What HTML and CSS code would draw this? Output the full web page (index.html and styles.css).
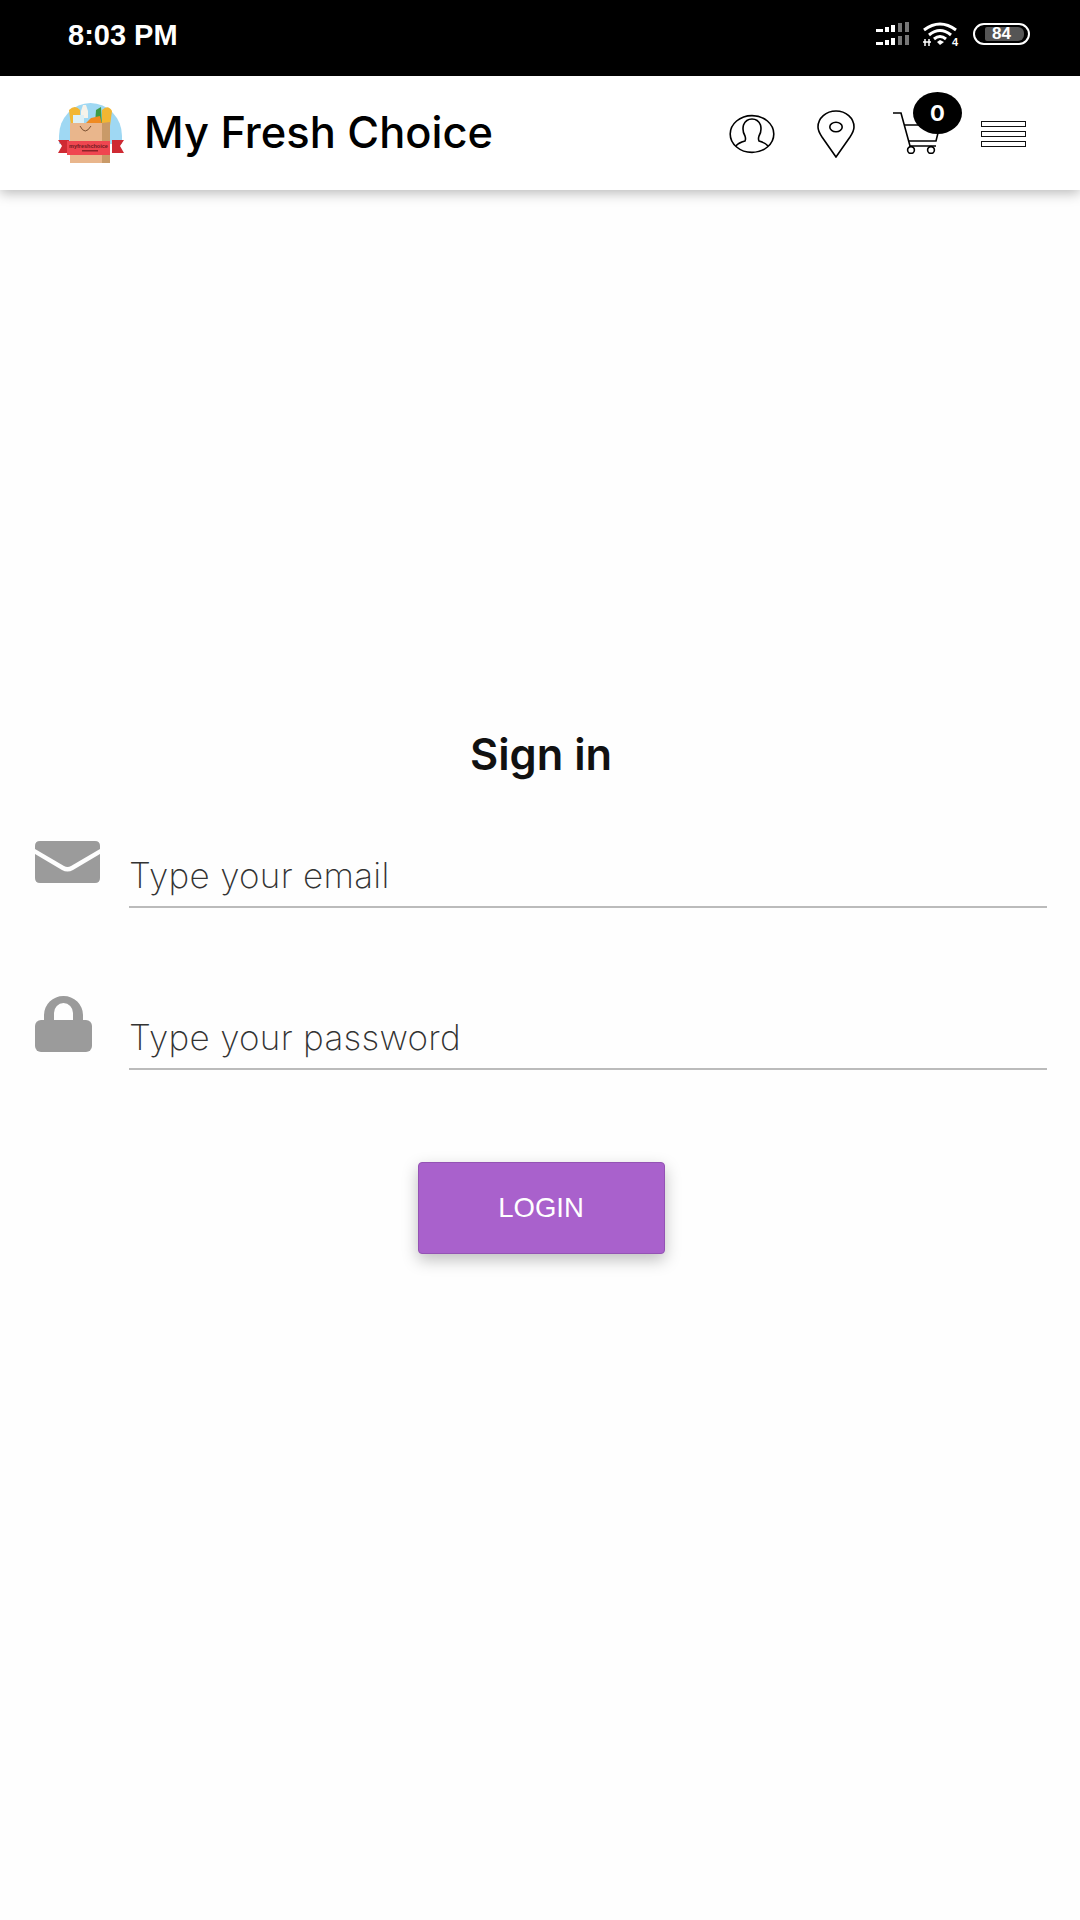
FILE: index.html
```html
<!DOCTYPE html>
<html lang="en">
<head>
    <meta charset="UTF-8">
    <meta name="viewport" content="width=device-width, initial-scale=1.0">
    <title>My Fresh Choice</title>
    <link rel="stylesheet" href="styles.css">
</head>
<body>
    <div class="status-bar">
        <span class="clock">8:03 PM</span>
        <div class="status-icons">
            <svg class="signal" width="36" height="24" viewBox="0 0 36 24">
                <g fill="#fff">
                    <rect x="0" y="7" width="7" height="3"/><rect x="9" y="5" width="4" height="5"/><rect x="15" y="3" width="4" height="7"/>
                    <rect x="0" y="20" width="7" height="3"/><rect x="9" y="18" width="4" height="5"/><rect x="15" y="16" width="4" height="7"/>
                </g>
                <g fill="#777">
                    <rect x="22" y="1" width="4" height="9"/><rect x="29" y="0" width="4" height="10"/>
                    <rect x="22" y="14" width="4" height="9"/><rect x="29" y="13" width="4" height="10"/>
                </g>
            </svg>
            <svg class="wifi" width="38" height="26" viewBox="0 0 38 26">
                <g fill="none" stroke="#fff" stroke-width="3">
                    <path d="M2 9 Q18 -3 34 9"/>
                    <path d="M7 14 Q18 5 29 14"/>
                    <path d="M12 18 Q18 13 24 18"/>
                </g>
                <path d="M15 21 L18 19 L22 21 L18 24 Z" fill="#fff"/>
                <path d="M3 18 V25 M7 18 V25 M1 21 H9" stroke="#fff" stroke-width="1.5" fill="none"/>
                <text class="wifi-num" x="30" y="25">4</text>
            </svg>
            <div class="battery">
                <span class="battery-fill"></span>
                <span class="battery-num">84</span>
            </div>
        </div>
    </div>

    <header class="app-header">
        <svg class="logo" width="68" height="62" viewBox="0 0 68 62">
            <path d="M1 34 A31.5 33 0 0 1 64 34 L64 42 L1 42 Z" fill="#9fd8f3"/>
            <path d="M11 8 Q17 2 22 8 L22 24 H13 Z" fill="#f2b632"/>
            <path d="M44 8 Q50 2 54 9 L52 24 H44 Z" fill="#f2b632"/>
            <path d="M23 9 L25 3 H28 L30 9 V16 H23 Z" fill="#f6f3ea"/>
            <rect x="15" y="13" width="11" height="9" fill="#dcf0f6"/>
            <path d="M37 22 L38 8 L43 5 L44 22 Z" fill="#3e9b45"/>
            <path d="M27 22 L33 16 L42 14 L44 22 Z" fill="#ef8a22"/>
            <path d="M12 21 H44 V61 H12 Z" fill="#e9b68c"/>
            <path d="M44 21 L52 20 V61 H44 Z" fill="#c99a68"/>
            <path d="M22 24 Q27 34 33 24" fill="none" stroke="#7a5030" stroke-width="1"/>
            <path d="M0 38 H11 V51 H0 L4 44 Z M66 38 H54 V51 H66 L62 44 Z" fill="#cf2a33"/>
            <rect x="9" y="39" width="43" height="14" fill="#ef4650"/>
            <text class="logo-text" x="11" y="46">myfreshchoice</text>
            <rect x="24" y="48" width="16" height="1.5" fill="#8e2329"/>
        </svg>
        <span class="brand">My Fresh Choice</span>
        <div class="header-icons">
            <svg class="icon-user" width="46" height="40" viewBox="0 0 46 40">
                <g fill="none" stroke="#000" stroke-width="1.6">
                    <ellipse cx="23" cy="20" rx="21.8" ry="18.4"/>
                    <path d="M7 32 Q9 29 16 27 Q17 25 16 22 Q13 17 14.5 11 Q17 5 23 5 Q29 5 31.5 11 Q33 17 30 22 Q29 25 30 27 Q37 29 39 32"/>
                </g>
            </svg>
            <svg class="icon-pin" width="38" height="48" viewBox="0 0 38 48">
                <g fill="none" stroke="#000" stroke-width="1.6">
                    <path d="M19 47 L5 27 Q1 21 1 17 A18 16 0 0 1 37 17 Q37 21 33 27 Z"/>
                    <ellipse cx="19" cy="17" rx="6.2" ry="4.8"/>
                </g>
            </svg>
            <div class="cart">
                <svg width="48" height="42" viewBox="0 0 48 42">
                    <g fill="none" stroke="#000" stroke-width="1.6">
                        <path d="M0 1 H8 L17 34 H43"/>
                        <path d="M11 13 H47 L43 29 H15"/>
                        <circle cx="18" cy="38" r="3.4"/>
                        <circle cx="38" cy="38" r="3.4"/>
                    </g>
                </svg>
                <span class="cart-badge">0</span>
            </div>
            <div class="menu-icon">
                <span></span><span></span><span></span>
            </div>
        </div>
    </header>

    <main class="login">
        <h1>Sign in</h1>
        <div class="field field-email">
            <svg class="field-icon" width="65" height="42" viewBox="0 0 65 42">
                <path d="M0 8 V5 Q0 0 5 0 H60 Q65 0 65 5 V8 L36 25 Q32.5 27 29 25 Z" fill="#9b9b9b"/>
                <path d="M0 13 L27 29 Q32.5 32 38 29 L65 13 V37 Q65 42 60 42 H5 Q0 42 0 37 Z" fill="#9b9b9b"/>
            </svg>
            <input type="text" placeholder="Type your email">
        </div>
        <div class="field field-password">
            <svg class="field-icon" width="65" height="56" viewBox="0 0 65 56">
                <path d="M9 26 V19 A19.5 19 0 0 1 48 19 V26 H38 V17 A9.5 10 0 0 0 19 17 V26 Z" fill="#9b9b9b"/>
                <rect x="0" y="24" width="57" height="32" rx="6" fill="#9b9b9b"/>
            </svg>
            <input type="password" placeholder="Type your password">
        </div>
        <button class="login-btn">LOGIN</button>
    </main>
</body>
</html>
```

FILE: styles.css
```css
body {
    margin: 0;
    min-height: 1920px;
    background-color: #fefefe;
    font-family: Inter, "Liberation Sans", sans-serif;
    color: #111;
}
.status-bar {
    height: 76px;
    background-color: #000;
    color: #fff;
    display: flex;
    align-items: center;
    justify-content: space-between;
    padding: 0 50px 0 68px;
    box-sizing: border-box;
}
.clock {
    font-family: "Liberation Sans", sans-serif;
    font-size: 29px;
    font-weight: bold;
    margin-top: -6px;
}
.status-icons {
    display: flex;
    align-items: center;
    gap: 13px;
    margin-top: -9px;
}
.signal {
    margin-right: -3px;
}
.wifi-num {
    font-family: "Liberation Sans", sans-serif;
    font-size: 11px;
    font-weight: bold;
    fill: #fff;
}
.battery {
    width: 57px;
    height: 22px;
    border: 2px solid #fff;
    border-radius: 12px;
    box-sizing: border-box;
    position: relative;
    display: flex;
    align-items: center;
    justify-content: center;
}
.battery-fill {
    position: absolute;
    left: 10px;
    top: 2px;
    bottom: 2px;
    right: 4px;
    background-color: #555;
    border-radius: 2px 6px 6px 2px;
}
.battery-num {
    position: relative;
    font-family: "Liberation Sans", sans-serif;
    font-size: 17px;
    font-weight: bold;
}
.app-header {
    height: 114px;
    background-color: #fff;
    display: flex;
    align-items: center;
    padding: 0 54px 0 58px;
    box-shadow: 0 3px 12px rgba(0, 0, 0, 0.28);
}
.logo-text {
    font-family: "Liberation Sans", sans-serif;
    font-size: 5.5px;
    font-weight: bold;
    fill: #6e1a20;
}
.brand {
    font-size: 43.4px;
    font-weight: 500;
    color: #000;
    margin-left: 18px;
    margin-top: -2px;
}
.header-icons {
    margin-left: auto;
    display: flex;
    align-items: center;
}
.icon-user {
    margin-right: 42px;
    margin-top: 2px;
}
.icon-pin {
    margin-right: 38px;
    margin-top: 2px;
}
.cart {
    position: relative;
    display: flex;
    margin-right: 40px;
}
.cart-badge {
    position: absolute;
    left: 20px;
    top: -20px;
    width: 49px;
    height: 42px;
    border-radius: 50%;
    background-color: #000;
    color: #fff;
    font-size: 22px;
    font-weight: 700;
    display: flex;
    align-items: center;
    justify-content: center;
}
.menu-icon {
    display: flex;
    flex-direction: column;
    gap: 4px;
    margin-top: 2px;
}
.menu-icon span {
    display: block;
    width: 45px;
    height: 6px;
    border: 1.8px solid #111;
    box-sizing: border-box;
}
.login {
    padding: 0 33px 0 35px;
}
h1 {
    margin: 0;
    padding-top: 540px;
    text-align: center;
    font-size: 43.4px;
    font-weight: 600;
    line-height: 48px;
}
.field {
    display: flex;
    gap: 29px;
    align-items: flex-start;
}
.field-email {
    margin-top: 63px;
}
.field-password {
    margin-top: 88px;
}
.field-password input {
    margin-top: 10px;
}
.field-icon {
    flex-shrink: 0;
}
.field input {
    flex-grow: 1;
    min-width: 0;
    height: 62px;
    padding: 0;
    border: none;
    border-bottom: 2px solid #bbb;
    background: transparent;
    outline: none;
    font-family: Inter, sans-serif;
    font-size: 35px;
    font-weight: 200;
    letter-spacing: 0.3px;
}
.field-email input {
    margin-top: 3px;
}
.field input::placeholder {
    color: #333;
    opacity: 1;
}
.login-btn {
    display: block;
    width: 247px;
    height: 92px;
    margin: 92px auto 0;
    background-color: #a961cc;
    color: #fff;
    border: 1px solid #9453b4;
    border-radius: 4px;
    box-shadow: 0 6px 16px rgba(0, 0, 0, 0.25);
    font-family: "Liberation Sans", sans-serif;
    font-size: 27.5px;
}
```
